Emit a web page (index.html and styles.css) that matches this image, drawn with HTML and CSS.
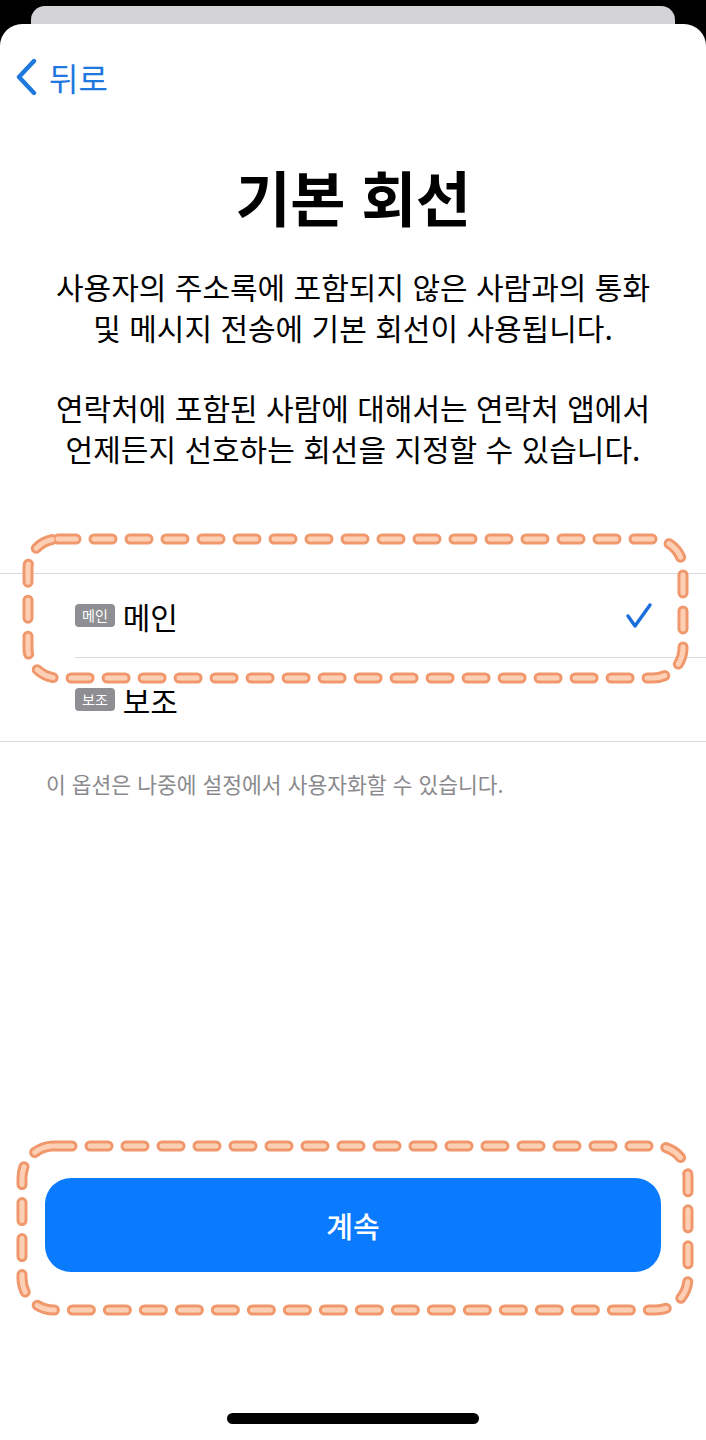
FILE: index.html
```html
<!DOCTYPE html>
<html lang="ko">
<head>
    <meta charset="UTF-8">
    <meta name="viewport" content="width=device-width, initial-scale=1.0">
    <title>기본 회선</title>
    <link rel="stylesheet" href="styles.css">
</head>
<body>
    <div class="card-behind"></div>
    <div class="sheet">
        <div class="navbar">
            <a href="#" class="back">
                <svg class="chevron" width="22" height="38" viewBox="0 0 22 38">
                    <path d="M19 3 L4 19 L19 35" fill="none" stroke="currentColor" stroke-width="4.4" stroke-linecap="round" stroke-linejoin="round"/>
                </svg>
                <span>뒤로</span>
            </a>
        </div>

        <h1 class="title">기본 회선</h1>
        <p class="desc">사용자의 주소록에 포함되지 않은 사람과의 통화<br>및 메시지 전송에 기본 회선이 사용됩니다.</p>
        <p class="desc">연락처에 포함된 사람에 대해서는 연락처 앱에서<br>언제든지 선호하는 회선을 지정할 수 있습니다.</p>

        <div class="options">
            <div class="option">
                <span class="badge">메인</span>
                <span class="label">메인</span>
                <svg class="check" width="28" height="28" viewBox="0 0 28 28">
                    <path d="M3 14 L10 24 L25 3" fill="none" stroke="currentColor" stroke-width="3.4" stroke-linecap="round" stroke-linejoin="round"/>
                </svg>
            </div>
            <div class="option">
                <span class="badge">보조</span>
                <span class="label">보조</span>
            </div>
        </div>
        <p class="note">이 옵션은 나중에 설정에서 사용자화할 수 있습니다.</p>

        <button class="continue-button">계속</button>
        <div class="home-indicator"></div>
    </div>

    <svg class="marks" width="706" height="1440" viewBox="0 0 706 1440">
        <g fill="none" stroke-linecap="round" stroke-dasharray="18 18">
            <rect x="28" y="539" width="655" height="139" rx="30" stroke="#f0986c" stroke-width="11"/>
            <rect x="28" y="539" width="655" height="139" rx="30" stroke="#fdd0b6" stroke-width="5"/>
            <rect x="22" y="1146" width="666" height="164" rx="32" stroke="#f0986c" stroke-width="11"/>
            <rect x="22" y="1146" width="666" height="164" rx="32" stroke="#fdd0b6" stroke-width="5"/>
        </g>
    </svg>
</body>
</html>
```

FILE: styles.css
```css
body {
    margin: 0;
    background-color: #000;
    font-family: "Noto Sans CJK KR", "Noto Sans", sans-serif;
    color: #000;
    position: relative;
}
.card-behind {
    height: 18px;
    margin: 6px 31px 0;
    background-color: #d4d4d8;
    border-radius: 14px 14px 0 0;
}
.sheet {
    background-color: #fff;
    border-radius: 22px 22px 0 0;
    min-height: 1416px;
    display: flex;
    flex-direction: column;
}
.navbar {
    padding: 34px 0 0 15px;
    height: 36px;
}
.back {
    display: flex;
    align-items: center;
    gap: 12px;
    color: #1f78de;
    text-decoration: none;
    font-size: 32px;
    line-height: 36px;
}
.chevron {
    display: block;
}
.title {
    margin: 70px 0 0;
    text-align: center;
    font-size: 60px;
    line-height: 64px;
    font-weight: 700;
    letter-spacing: -0.5px;
}
.desc {
    margin: 38px 0 0;
    text-align: center;
    font-size: 30px;
    line-height: 41px;
}
.desc + .desc {
    margin-top: 39px;
}
.options {
    margin-top: 104px;
    border-top: 1px solid #d9d9dd;
    border-bottom: 1px solid #d9d9dd;
}
.option {
    display: flex;
    align-items: center;
    height: 83px;
    margin-left: 75px;
    padding-right: 53px;
}
.option + .option {
    border-top: 1px solid #d9d9dd;
}
.badge {
    background-color: #8e8e93;
    color: #fff;
    font-size: 14px;
    line-height: 23px;
    padding: 0 7px;
    border-radius: 4px;
    margin-right: 8px;
}
.label {
    font-size: 30px;
    line-height: 36px;
    flex: 1;
}
.check {
    color: #1a6fdc;
    display: block;
}
.note {
    margin: 28px 0 0;
    padding-left: 46px;
    color: #8a8a8e;
    font-size: 21.5px;
    line-height: 28px;
}
.continue-button {
    margin: auto 45px 141px;
    height: 94px;
    border: none;
    border-radius: 26px;
    background-color: #0a7bff;
    color: #fff;
    font-family: inherit;
    font-size: 29px;
    font-weight: 500;
}
.home-indicator {
    width: 252px;
    height: 11px;
    margin: 0 auto 16px;
    background-color: #000;
    border-radius: 6px;
}
.marks {
    position: absolute;
    top: 0;
    left: 0;
    pointer-events: none;
}
```
